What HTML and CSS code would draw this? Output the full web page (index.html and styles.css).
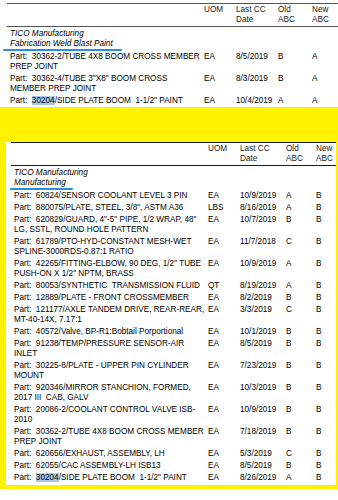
FILE: index.html
```html
<!DOCTYPE html>
<html>
<head>
<meta charset="utf-8">
<link rel="stylesheet" href="styles.css">
</head>
<body>
<div class="report first">
  <div class="row head"><div class="desc"></div><div>UOM</div><div>Last CC<br>Date</div><div>Old<br>ABC</div><div>New<br>ABC</div></div>
  <div class="group">TICO Manufacturing<br>Fabrication Weld Blast Paint</div>
  <div class="mark"></div>
  <div class="row"><div class="desc">Part:  30362-2/TUBE 4X8 BOOM CROSS MEMBER<br>PREP JOINT</div><div>EA</div><div>8/5/2019</div><div>B</div><div>A</div></div>
  <div class="row"><div class="desc">Part:  30362-4/TUBE 3"X8" BOOM CROSS<br>MEMBER PREP JOINT</div><div>EA</div><div>8/3/2019</div><div>B</div><div>A</div></div>
  <div class="row"><div class="desc">Part:  <span class="sel">30204</span>/SIDE PLATE BOOM  1-1/2" PAINT</div><div>EA</div><div>10/4/2019</div><div>A</div><div>A</div></div>
</div>
<div class="yellow">
  <div class="box">
    <div class="report second">
      <div class="row head"><div class="desc"></div><div>UOM</div><div>Last CC<br>Date</div><div>Old<br>ABC</div><div>New<br>ABC</div></div>
      <div class="group">TICO Manufacturing<br>Manufacturing</div>
      <div class="mark"></div>
      <div class="row"><div class="desc">Part:  60824/SENSOR COOLANT LEVEL 3 PIN</div><div>EA</div><div>10/9/2019</div><div>A</div><div>B</div></div>
      <div class="row"><div class="desc">Part:  880075/PLATE, STEEL, 3/8", ASTM A36</div><div>LBS</div><div>8/16/2019</div><div>A</div><div>B</div></div>
      <div class="row"><div class="desc">Part:  620829/GUARD, 4"-5" PIPE, 1/2 WRAP, 48"<br>LG, SSTL, ROUND HOLE PATTERN</div><div>EA</div><div>10/7/2019</div><div>B</div><div>B</div></div>
      <div class="row"><div class="desc">Part:  61789/PTO-HYD-CONSTANT MESH-WET<br>SPLINE-3000RDS-0.87:1 RATIO</div><div>EA</div><div>11/7/2018</div><div>C</div><div>B</div></div>
      <div class="row"><div class="desc">Part:  42265/FITTING-ELBOW, 90 DEG, 1/2" TUBE<br>PUSH-ON X 1/2" NPTM, BRASS</div><div>EA</div><div>10/9/2019</div><div>A</div><div>B</div></div>
      <div class="row"><div class="desc">Part:  80053/SYNTHETIC  TRANSMISSION FLUID</div><div>QT</div><div>8/19/2019</div><div>A</div><div>B</div></div>
      <div class="row"><div class="desc">Part:  12889/PLATE - FRONT CROSSMEMBER</div><div>EA</div><div>8/2/2019</div><div>B</div><div>B</div></div>
      <div class="row"><div class="desc">Part:  121177/AXLE TANDEM DRIVE, REAR-REAR,<br>MT-40-14X, 7.17:1</div><div>EA</div><div>3/3/2019</div><div>C</div><div>B</div></div>
      <div class="row"><div class="desc">Part:  40572/Valve, BP-R1:Bobtail Porportional</div><div>EA</div><div>10/1/2019</div><div>B</div><div>B</div></div>
      <div class="row"><div class="desc">Part:  91238/TEMP/PRESSURE SENSOR-AIR<br>INLET</div><div>EA</div><div>8/5/2019</div><div>B</div><div>B</div></div>
      <div class="row"><div class="desc">Part:  30225-8/PLATE - UPPER PIN CYLINDER<br>MOUNT</div><div>EA</div><div>7/23/2019</div><div>B</div><div>B</div></div>
      <div class="row"><div class="desc">Part:  920346/MIRROR STANCHION, FORMED,<br>2017 III  CAB, GALV</div><div>EA</div><div>10/3/2019</div><div>B</div><div>B</div></div>
      <div class="row"><div class="desc">Part:  20086-2/COOLANT CONTROL VALVE ISB-<br>2010</div><div>EA</div><div>10/9/2019</div><div>B</div><div>B</div></div>
      <div class="row"><div class="desc">Part:  30362-2/TUBE 4X8 BOOM CROSS MEMBER<br>PREP JOINT</div><div>EA</div><div>7/18/2019</div><div>B</div><div>B</div></div>
      <div class="row"><div class="desc">Part:  620656/EXHAUST, ASSEMBLY, LH</div><div>EA</div><div>5/3/2019</div><div>C</div><div>B</div></div>
      <div class="row"><div class="desc">Part:  62055/CAC ASSEMBLY-LH ISB13</div><div>EA</div><div>8/5/2019</div><div>B</div><div>B</div></div>
      <div class="row"><div class="desc">Part:  <span class="sel">30204</span>/SIDE PLATE BOOM  1-1/2" PAINT</div><div>EA</div><div>8/26/2019</div><div>A</div><div>B</div></div>
    </div>
  </div>
</div>
</body>
</html>
```
FILE: styles.css
```css
* { box-sizing: border-box; }
html, body { margin: 0; padding: 0; background: #fff; }
body {
  font-family: "Liberation Sans", Arial, sans-serif;
  font-size: 8.2px;
  line-height: 10px;
  color: #000;
  overflow: hidden;
}
.report { display: flex; flex-direction: column; }
.first { margin: 3px 0 0 7px; --cols: 194px 32px 42px 34px 1fr; }
.second { margin: 3px 0 0 5px; --cols: 194px 32px 46px 30px 1fr; }
.row {
  display: grid;
  grid-template-columns: var(--cols);
  padding: 1px 0 1px 3px;
}
.row > div { white-space: pre; }
.head {
  border-top: 1px solid #555;
  border-bottom: 1px solid #555;
  color: #1a1a1a;
}
.second .head { border-color: #1a1a1a; }
.group {
  font-style: italic;
  padding: 2px 0 0 3px;
  white-space: nowrap;
}
.mark {
  height: 2px;
  background: #2a8fd8;
  border-radius: 1px;
}
.first .mark { margin-left: -4px; width: 119px; }
.second .mark { margin-left: -1px; width: 63px; }
.sel { background: #a9c9ea; }
.yellow {
  background: #fff200;
  padding: 32px 2px 4px 6px;
}
.box {
  background: #fff;
  padding-bottom: 1px;
}
```
